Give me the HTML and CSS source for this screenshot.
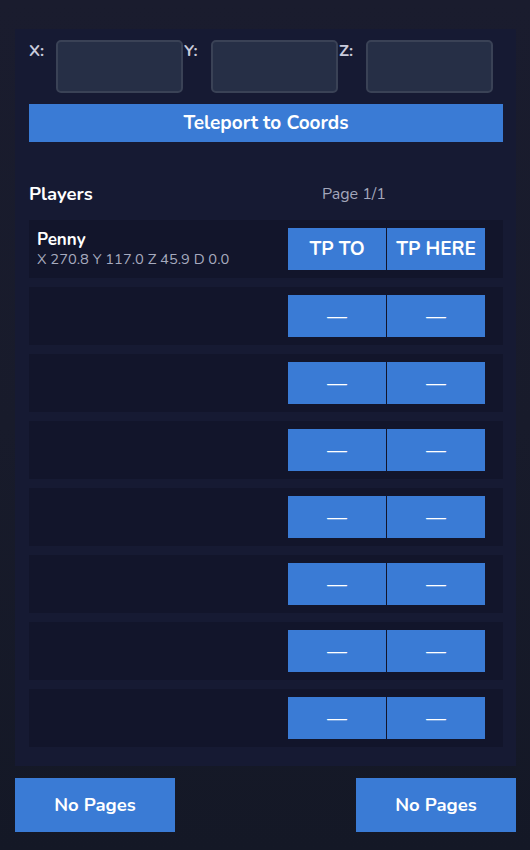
FILE: index.html
```html
<!DOCTYPE html>
<html>
<head>
<meta charset="utf-8">
<link rel="stylesheet" href="styles.css">
</head>
<body>
<div class="app">
  <section class="panel coords">
    <div class="coord-row">
      <div class="coord-group"><span class="coord-label">X:</span><input class="coord-input" type="text"></div>
      <div class="coord-group"><span class="coord-label">Y:</span><input class="coord-input" type="text"></div>
      <div class="coord-group"><span class="coord-label">Z:</span><input class="coord-input" type="text"></div>
    </div>
    <button class="btn wide">Teleport to Coords</button>
  </section>
  <section class="panel players">
    <div class="players-head">
      <span class="players-title">Players</span>
      <span class="page-info">Page 1/1</span>
    </div>
    <div class="rows">
      <div class="row">
        <div class="who">
          <div class="who-name">Penny</div>
          <div class="who-pos">X 270.8 Y 117.0 Z 45.9 D 0.0</div>
        </div>
        <div class="actions"><button class="btn act">TP TO</button><button class="btn act">TP HERE</button></div>
      </div>
      <div class="row"><div class="who"></div><div class="actions"><button class="btn act dash">—</button><button class="btn act dash">—</button></div></div>
      <div class="row"><div class="who"></div><div class="actions"><button class="btn act dash">—</button><button class="btn act dash">—</button></div></div>
      <div class="row"><div class="who"></div><div class="actions"><button class="btn act dash">—</button><button class="btn act dash">—</button></div></div>
      <div class="row"><div class="who"></div><div class="actions"><button class="btn act dash">—</button><button class="btn act dash">—</button></div></div>
      <div class="row"><div class="who"></div><div class="actions"><button class="btn act dash">—</button><button class="btn act dash">—</button></div></div>
      <div class="row"><div class="who"></div><div class="actions"><button class="btn act dash">—</button><button class="btn act dash">—</button></div></div>
      <div class="row"><div class="who"></div><div class="actions"><button class="btn act dash">—</button><button class="btn act dash">—</button></div></div>
    </div>
  </section>
  <div class="pager">
    <button class="btn page-btn">No Pages</button>
    <button class="btn page-btn">No Pages</button>
  </div>
</div>
</body>
</html>
```
FILE: styles.css
```css
* { box-sizing: border-box; }
html, body { margin: 0; height: 100%; }
body {
  background: linear-gradient(180deg, #1a1c2e 0%, #181b2b 50%, #141826 100%);
  font-family: "Nunito", Lato, "Open Sans", sans-serif;
  color: #ffffff;
  width: 530px;
  height: 850px;
  overflow: hidden;
}
.app {
  padding: 29px 14px 0 15px;
}
.panel {
  background: #161a33;
}
.coords {
  padding: 11px 13px 14px 14px;
}
.coord-row {
  display: flex;
}
.coord-group {
  display: flex;
  align-items: flex-start;
}
.coord-label {
  width: 27px;
  font-size: 16.5px;
  font-weight: 700;
  line-height: 21px;
  color: #c9cbdc;
}
.coord-input {
  width: 127px;
  height: 53px;
  margin: 0 1px 0 0;
  background: #262f46;
  border: 2px solid #3a4256;
  border-radius: 5px;
  outline: none;
}
.btn {
  border: 0;
  margin: 0;
  padding: 0;
  background: #3a7bd5;
  color: #ffffff;
  font-family: inherit;
  font-weight: 700;
  cursor: pointer;
}
.wide {
  display: block;
  width: 100%;
  height: 38px;
  margin-top: 11px;
  font-size: 19px;
}
.players {
  padding: 26px 13px 19px 14px;
}
.players-head {
  display: flex;
  align-items: center;
  height: 24px;
  margin-bottom: 14px;
}
.players-title {
  width: 293px;
  font-size: 18.5px;
  font-weight: 700;
}
.page-info {
  font-size: 16px;
  color: #a3a7bb;
}
.rows {
  display: flex;
  flex-direction: column;
  gap: 9px;
}
.row {
  height: 58px;
  background: #12152b;
  display: flex;
  align-items: center;
  justify-content: space-between;
  padding: 0 18px 0 8px;
}
.who-name {
  font-size: 17px;
  font-weight: 700;
  line-height: 20px;
}
.who-pos {
  font-size: 14.7px;
  line-height: 18px;
  color: #a6aabe;
}
.actions {
  display: flex;
  gap: 1px;
}
.act {
  width: 98px;
  height: 42px;
  font-size: 19px;
}
.dash {
  font-weight: 400;
  font-size: 20px;
}
.pager {
  display: flex;
  justify-content: space-between;
  margin-top: 12px;
}
.page-btn {
  width: 160px;
  height: 54px;
  font-size: 18.5px;
}
```
